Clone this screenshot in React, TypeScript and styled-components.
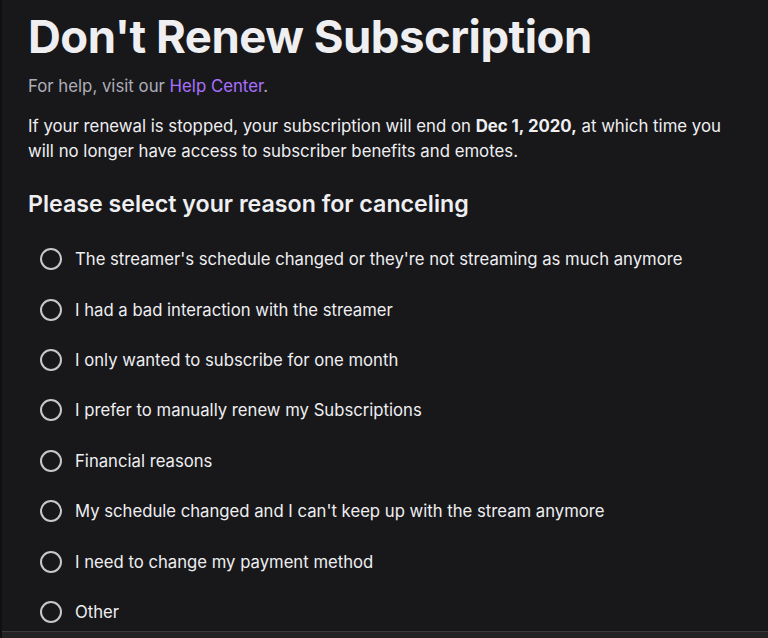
import styled, { createGlobalStyle } from "styled-components";

const reasons = [
  "The streamer's schedule changed or they're not streaming as much anymore",
  "I had a bad interaction with the streamer",
  "I only wanted to subscribe for one month",
  "I prefer to manually renew my Subscriptions",
  "Financial reasons",
  "My schedule changed and I can't keep up with the stream anymore",
  "I need to change my payment method",
  "Other",
];

const App = () => {
  return (
    <>
      <GlobalStyle />
      <Page>
        <Content>
          <Title>Don't Renew Subscription</Title>
          <HelpText>
            For help, visit our <HelpLink href="#">Help Center</HelpLink>.
          </HelpText>
          <Notice>
            If your renewal is stopped, your subscription will end on{" "}
            <strong>Dec 1, 2020,</strong> at which time you will no longer have
            access to subscriber benefits and emotes.
          </Notice>
          <ReasonHeading>Please select your reason for canceling</ReasonHeading>
          <ReasonList>
            {reasons.map((reason) => (
              <ReasonRow key={reason}>
                <RadioInput type="radio" name="reason" />
                <ReasonLabel>{reason}</ReasonLabel>
              </ReasonRow>
            ))}
          </ReasonList>
        </Content>
        <Footer />
      </Page>
    </>
  );
};

export default App;

const GlobalStyle = createGlobalStyle`
  html, body {
    margin: 0;
    padding: 0;
    background: #18181b;
  }
  body {
    font-family: "Inter", "Roboto", sans-serif;
    color: #efeff1;
  }
`;

const Page = styled.div`
  width: 768px;
  height: 638px;
  display: flex;
  flex-direction: column;
  border-left: 2px solid #101012;
  box-sizing: border-box;
  overflow: hidden;
`;

const Content = styled.main`
  flex: 1;
  padding: 10px 0 0 26px;
`;

const Title = styled.h1`
  margin: 0;
  font-size: 45.5px;
  font-weight: 700;
  letter-spacing: -0.5px;
  line-height: 54px;
  color: #efeff1;
`;

const HelpText = styled.p`
  margin: 12px 0 0;
  font-size: 16.8px;
  line-height: 20px;
  color: #adadb8;
`;

const HelpLink = styled.a`
  color: #a970ff;
  text-decoration: none;
`;

const Notice = styled.p`
  margin: 18px 0 0;
  width: 706px;
  font-size: 16.8px;
  line-height: 25px;
  color: #efeff1;

  strong {
    font-weight: 700;
  }
`;

const ReasonHeading = styled.h2`
  margin: 26px 0 0;
  font-size: 23.2px;
  font-weight: 600;
  line-height: 28px;
  color: #efeff1;
`;

const ReasonList = styled.div`
  margin-top: 31px;
  padding-left: 12px;
  display: flex;
  flex-direction: column;
  gap: 30px;
`;

const ReasonRow = styled.label`
  display: flex;
  align-items: center;
  gap: 13px;
  height: 20.4px;
  cursor: pointer;
`;

const RadioInput = styled.input`
  appearance: none;
  margin: 0;
  width: 22px;
  height: 22px;
  border: 2.5px solid #c8c8cc;
  border-radius: 50%;
  box-sizing: border-box;
  background: transparent;
  flex-shrink: 0;
`;

const ReasonLabel = styled.span`
  font-size: 16.7px;
  line-height: 20px;
  color: #efeff1;
`;

const Footer = styled.div`
  height: 6px;
  border-top: 1px solid #3a3a3d;
  background: #232326;
`;
